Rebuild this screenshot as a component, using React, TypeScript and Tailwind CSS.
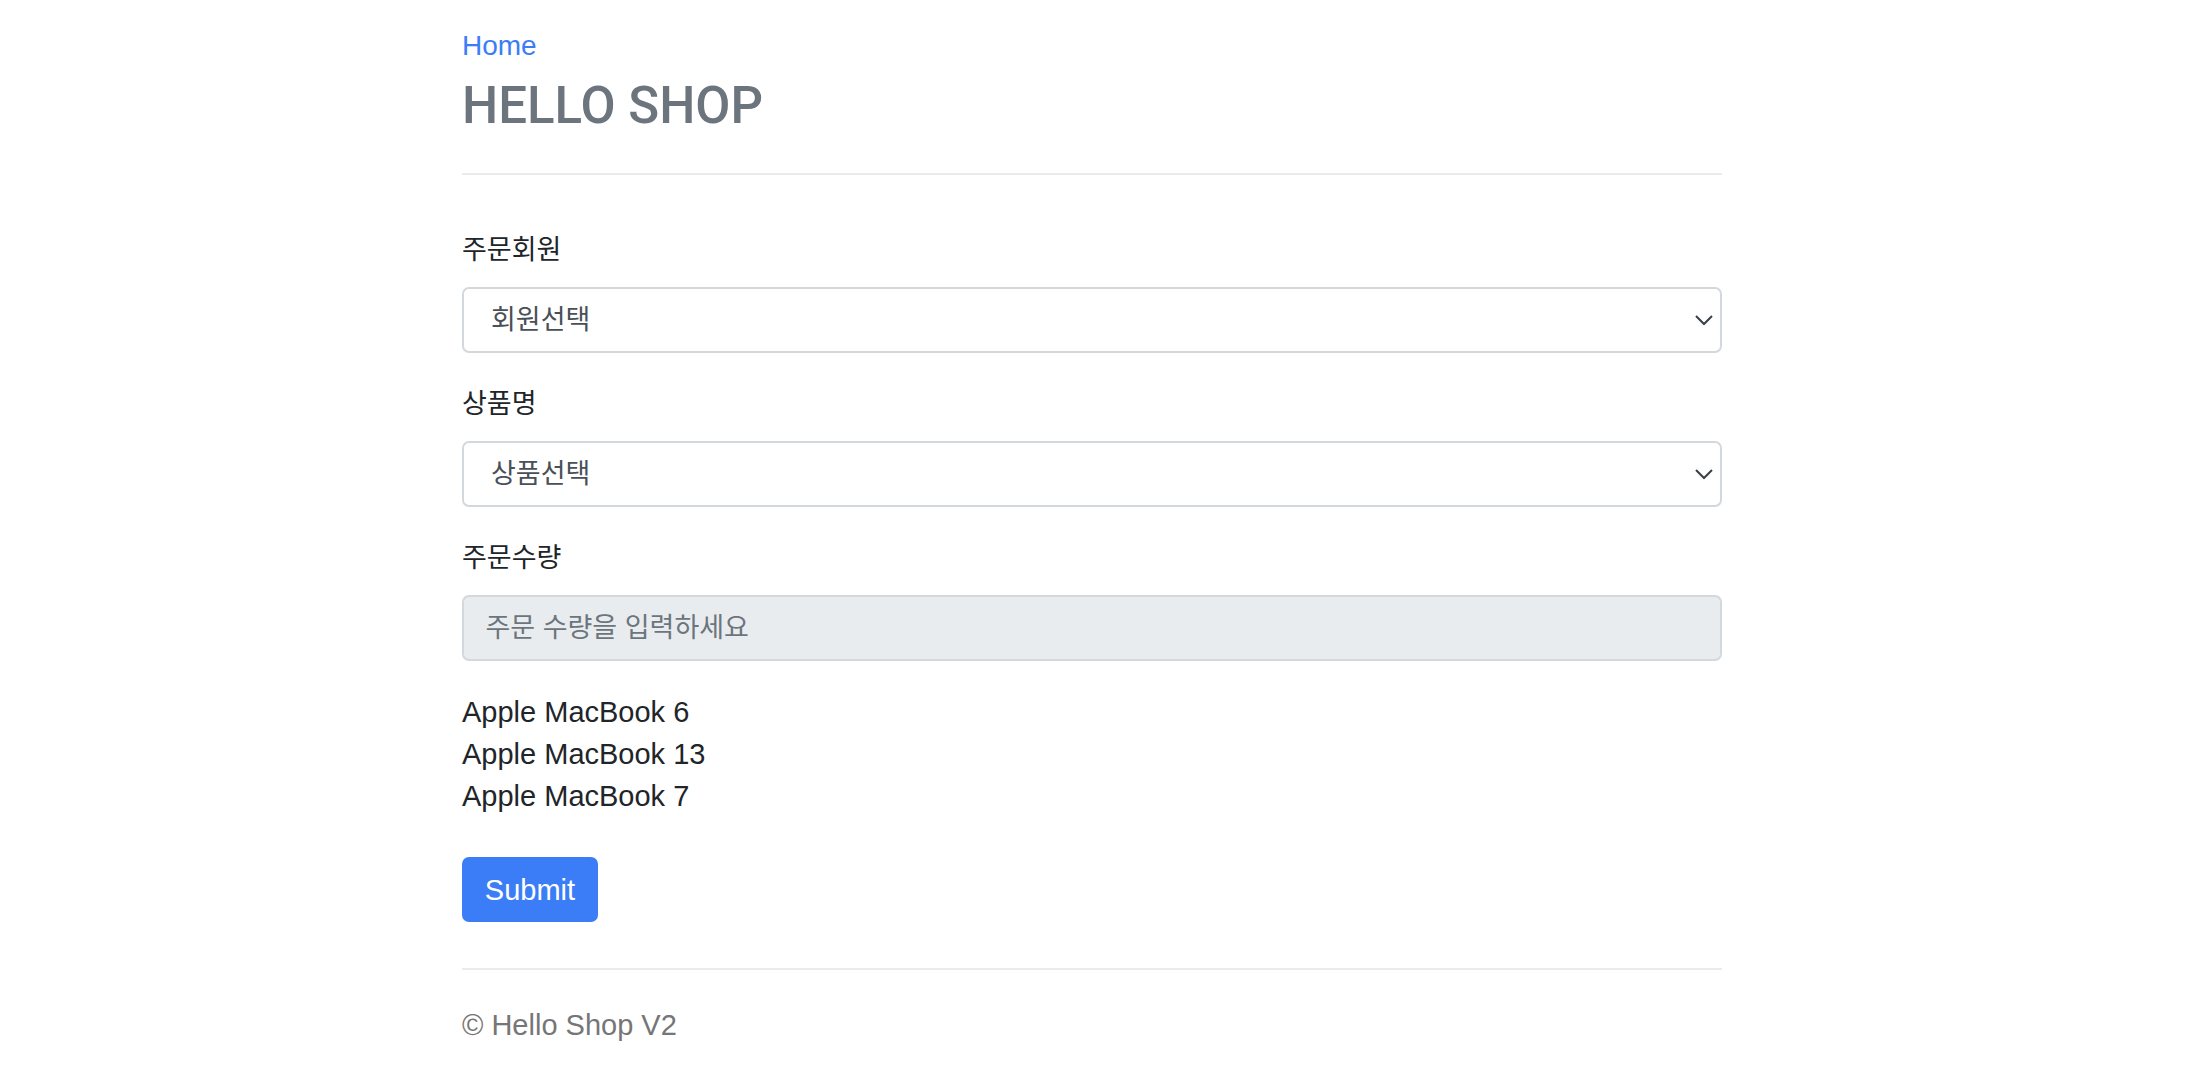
import React from "react";

function Chevron() {
  return (
    <svg
      width="18"
      height="11"
      viewBox="0 0 18 11"
      className="pointer-events-none absolute right-[7px] top-1/2 -translate-y-1/2"
    >
      <polyline points="1,1.5 9,9.5 17,1.5" fill="none" stroke="#3a3f45" strokeWidth="2" />
    </svg>
  );
}

function SelectField({ label, placeholder }: { label: string; placeholder: string }) {
  return (
    <div className="mb-[30px]">
      <label className="mb-[16px] block h-[42px] text-[27px] leading-[42px] text-[#212529]">{label}</label>
      <div className="relative h-[66px] rounded-[7px] border-2 border-[#d3d8dd] bg-white">
        <select className="h-full w-full appearance-none bg-transparent pl-[27px] text-[27px] text-[#495057] outline-none">
          <option>{placeholder}</option>
        </select>
        <Chevron />
      </div>
    </div>
  );
}

export default function App() {
  return (
    <div
      className="min-h-screen bg-white text-[#212529]"
      style={{ fontFamily: '"Liberation Sans", "Noto Sans CJK KR", sans-serif' }}
    >
      <div className="ml-[462px] w-[1260px] pt-[25px]">
        <a href="#" className="block h-[42px] text-[28px] leading-[42px] text-[#3b7df6]">
          Home
        </a>
        <h3
          className="mt-[11px] text-[51px] leading-[56px] font-medium text-[#6c757d]"
          style={{ fontFamily: 'Roboto, "Liberation Sans", sans-serif' }}
        >
          HELLO SHOP
        </h3>
        <hr className="mt-[39px] border-0 border-t-2 border-[#ebebeb]" />

        <form className="mt-[54px]" onSubmit={(e) => e.preventDefault()}>
          <SelectField label="주문회원" placeholder="회원선택" />
          <SelectField label="상품명" placeholder="상품선택" />
          <div className="mb-[30px]">
            <label className="mb-[16px] block h-[42px] text-[27px] leading-[42px] text-[#212529]">주문수량</label>
            <input
              readOnly
              placeholder="주문 수량을 입력하세요"
              className="block h-[66px] w-full rounded-[7px] border-2 border-[#d3d8dd] bg-[#e9ecef] pl-[21.5px] text-[27px] text-[#495057] outline-none placeholder:text-[#6c757d]"
            />
          </div>

          <div className="text-[29px] leading-[42px] text-[#212529]">
            <div>Apple MacBook 6</div>
            <div>Apple MacBook 13</div>
            <div>Apple MacBook 7</div>
          </div>

          <button
            type="submit"
            className="mt-[40px] flex h-[65px] w-[136px] items-center justify-center rounded-[7px] bg-[#3b7df6] text-[29px] leading-[42px] text-white"
          >
            Submit
          </button>
        </form>

        <hr className="mt-[46px] border-0 border-t-2 border-[#ebebeb]" />
        <div className="mt-[34px] text-[29px] leading-[42px] text-[#767676]">© Hello Shop V2</div>
      </div>
    </div>
  );
}
